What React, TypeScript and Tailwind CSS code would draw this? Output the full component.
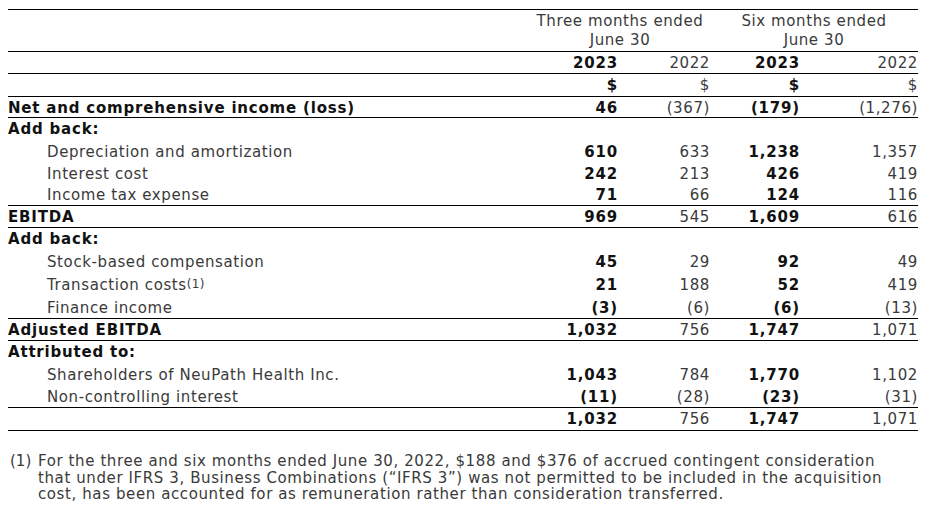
type Row = {
  label: string;
  kind: "head" | "item" | "section";
  values?: [string, string, string, string];
  h: string;
  border?: boolean;
  sup?: string;
};

const rows: Row[] = [
  { label: "Net and comprehensive income (loss)", kind: "head", values: ["46", "(367)", "(179)", "(1,276)"], h: "h-[21px]", border: true },
  { label: "Add back:", kind: "section", h: "h-[23px]" },
  { label: "Depreciation and amortization", kind: "item", values: ["610", "633", "1,238", "1,357"], h: "h-[22px]" },
  { label: "Interest cost", kind: "item", values: ["242", "213", "426", "419"], h: "h-[21px]" },
  { label: "Income tax expense", kind: "item", values: ["71", "66", "124", "116"], h: "h-[22px]", border: true },
  { label: "EBITDA", kind: "head", values: ["969", "545", "1,609", "616"], h: "h-[22px]", border: true },
  { label: "Add back:", kind: "section", h: "h-[23px]" },
  { label: "Stock-based compensation", kind: "item", values: ["45", "29", "92", "49"], h: "h-[23px]" },
  { label: "Transaction costs", kind: "item", values: ["21", "188", "52", "419"], h: "h-[23px]", sup: "(1)" },
  { label: "Finance income", kind: "item", values: ["(3)", "(6)", "(6)", "(13)"], h: "h-[22px]", border: true },
  { label: "Adjusted EBITDA", kind: "head", values: ["1,032", "756", "1,747", "1,071"], h: "h-[22px]", border: true },
  { label: "Attributed to:", kind: "section", h: "h-[23px]" },
  { label: "Shareholders of NeuPath Health Inc.", kind: "item", values: ["1,043", "784", "1,770", "1,102"], h: "h-[22px]" },
  { label: "Non-controlling interest", kind: "item", values: ["(11)", "(28)", "(23)", "(31)"], h: "h-[22px]", border: true },
  { label: "", kind: "item", values: ["1,032", "756", "1,747", "1,071"], h: "h-[23px]", border: true },
];

const grid = "grid grid-cols-[520px_90px_92px_90px_118px]";
const bold = "font-bold text-[#111] tracking-[0.8px]";

function Values({ values }: { values?: [string, string, string, string] }) {
  if (!values) {
    return (
      <>
        <div />
        <div />
        <div />
        <div />
      </>
    );
  }
  return (
    <>
      <div className={`text-right ${bold}`}>{values[0]}</div>
      <div className="text-right">{values[1]}</div>
      <div className={`text-right ${bold}`}>{values[2]}</div>
      <div className="text-right">{values[3]}</div>
    </>
  );
}

export default function App() {
  return (
    <div className="min-h-screen bg-white pt-[9px] pl-[8px] text-[15px] tracking-[0.6px] text-[#3a3a3a] font-['DejaVu_Sans',Verdana,sans-serif]">
      <div className="w-[910px] border-t border-black">
        {/* Column headings */}
        <div className={`${grid} h-[42px] border-b border-black leading-[19px] pt-[2px]`}>
          <div />
          <div className="col-span-2 text-center pl-[2px]">
            <div>Three months ended</div>
            <div>June 30</div>
          </div>
          <div className="col-span-2 text-center">
            <div>Six months ended</div>
            <div>June 30</div>
          </div>
        </div>
        <div className={`${grid} h-[22px] items-center border-b border-black`}>
          <div />
          <div className={`text-right ${bold}`}>2023</div>
          <div className="text-right">2022</div>
          <div className={`text-right ${bold}`}>2023</div>
          <div className="text-right">2022</div>
        </div>
        <div className={`${grid} h-[23px] items-center border-b border-black`}>
          <div />
          <div className={`text-right ${bold}`}>$</div>
          <div className="text-right">$</div>
          <div className={`text-right ${bold}`}>$</div>
          <div className="text-right">$</div>
        </div>

        {rows.map((r, i) => (
          <div
            key={i}
            className={`${grid} ${r.h} items-center ${r.border ? "border-b border-black" : ""}`}
          >
            <div
              className={
                r.kind === "item"
                  ? "pl-[39px] whitespace-nowrap"
                  : `whitespace-nowrap ${bold}`
              }
            >
              {r.label}
              {r.sup && <sup className="text-[12px] tracking-[0.3px] relative -top-[2px]">{r.sup}</sup>}
            </div>
            <Values values={r.values} />
          </div>
        ))}
      </div>

      {/* Footnote */}
      <div className="mt-[22px] flex leading-[16.5px] whitespace-nowrap">
        <div className="w-[30px] pl-[2px] tracking-normal">(1)</div>
        <div>
          For the three and six months ended June 30, 2022, $188 and $376 of accrued contingent consideration
          <br />
          that under IFRS 3, Business Combinations (“IFRS 3”) was not permitted to be included in the acquisition
          <br />
          cost, has been accounted for as remuneration rather than consideration transferred.
        </div>
      </div>
    </div>
  );
}
